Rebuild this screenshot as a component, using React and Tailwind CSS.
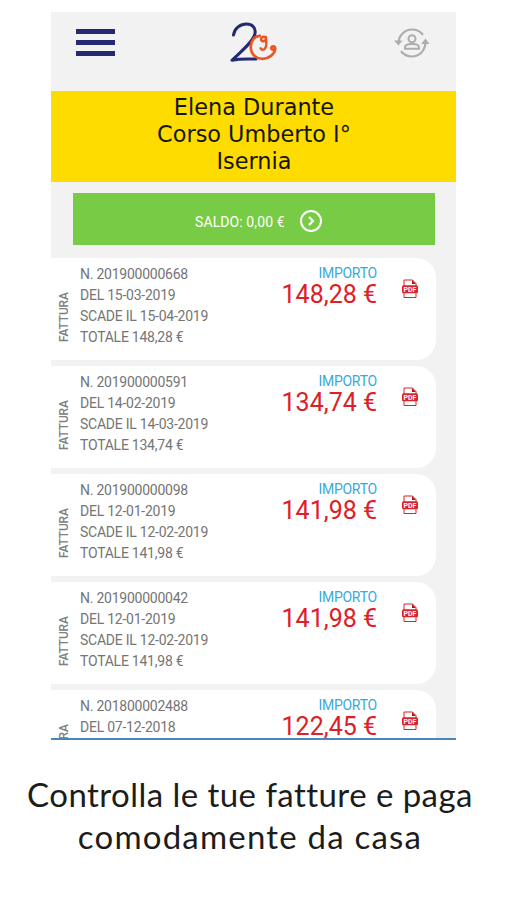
const invoices = [
  { n: "201900000668", date: "15-03-2019", due: "15-04-2019", total: "148,28" },
  { n: "201900000591", date: "14-02-2019", due: "14-03-2019", total: "134,74" },
  { n: "201900000098", date: "12-01-2019", due: "12-02-2019", total: "141,98" },
  { n: "201900000042", date: "12-01-2019", due: "12-02-2019", total: "141,98" },
  { n: "201800002488", date: "07-12-2018", total: "122,45" },
];

function Logo() {
  return (
    <svg width="50" height="42" viewBox="0 0 50 42" fill="none" strokeLinecap="round" strokeLinejoin="round">
      <path d="M3.500 13C4.500 6 10.500 2 16.500 2c6 0 9.500 4 8.500 9.500C24 19 11.500 29 2 38.300c8-1.800 17-1.500 24-1.200" stroke="#232a72" strokeWidth="3" />
      <path d="M30 13.800C24.500 14 20.500 19 20.800 25.500c.3 7 5.700 11.600 12 11.300C39.500 36.300 44.800 32 45.200 27c.3-3-2.800-3.400-3.800-1.600-.6 1.900 1.300 2.900 2.900 1.800" stroke="#ea5523" strokeWidth="2.700" />
      <path d="M35.600 15.500c-1.700-1.400-4.500-.6-4.500 1.700 0 2.600 3.500 2.800 4.700.5M35.800 15c.8 5 1.400 10.500-1.600 12.300-1.400.8-2.900.3-3.600-.9" stroke="#ea5523" strokeWidth="2.500" />
    </svg>
  );
}

function SwitchUser() {
  return (
    <svg width="36" height="32" viewBox="0 0 36 32" fill="none" stroke="#adadad" strokeWidth="2.200">
      <path d="M4.500 15.500C5 8 11 2.500 18 2.500c4.500 0 8.500 2 11 5.200M31.500 15.500C31 24 25 29.500 18 29.500c-4.500 0-8.500-2-11-5.200" />
      <path d="M0 13.500h8.500l-4 5zM27 17h8.500l-4-5.500z" fill="#adadad" stroke="none" />
      <circle cx="18" cy="11.800" r="3.500" strokeWidth="2" />
      <path d="M11 21.800v-1.500c0-2.300 3-3.400 7-3.400s7 1.100 7 3.400v1.500z" strokeWidth="2" />
    </svg>
  );
}

function PdfIcon() {
  return (
    <svg width="18" height="20" viewBox="0 0 18 20" fill="none">
      <path d="M3 7V1h8.500L15 4.500V7M3 14v4.500h12V14" stroke="#d8232a" strokeWidth="1" />
      <path d="M11 1v4h4z" fill="#b5121b" />
      <rect x="1" y="6.300" width="16" height="8" rx="1.500" fill="#d8232a" />
      <text x="9" y="12.800" textAnchor="middle" fontFamily="Roboto, sans-serif" fontWeight="700" fontSize="7" fill="#fff">PDF</text>
    </svg>
  );
}

function Invoice({ n, date, due, total }) {
  return (
    <article className="flex h-[102px] w-[385px] shrink-0 rounded-r-[20px] bg-white">
      <div className="flex w-[29px] shrink-0 items-start pl-[6px] pt-[33px]">
        <span className="h-[51px] rotate-180 whitespace-nowrap text-[12px] font-medium leading-[15px] tracking-[-0.15px] text-[#808080] [writing-mode:vertical-rl]">FATTURA</span>
      </div>
      <div className="grow whitespace-nowrap pt-[6px] text-[14px] leading-[21.1px] tracking-[-0.24px] text-[#757575]">
        <p>N. {n}</p>
        <p>DEL {date}</p>
        {due && <p>SCADE IL {due}</p>}
        {due && <p>TOTALE {total} €</p>}
      </div>
      <div className="mr-[24px] whitespace-nowrap pt-[6px] text-right">
        <p className="text-[14px] leading-[19.500px] tracking-[-0.25px] text-[#38a9dc]">IMPORTO</p>
        <p className="text-[25px] leading-[22px] text-[#dc2026]">{total} €</p>
      </div>
      <div className="mr-[17px] pt-[21px]"><PdfIcon /></div>
    </article>
  );
}

export default function App() {
  return (
    <main className="flex h-[900px] w-[507px] flex-col overflow-hidden bg-white pt-[12px] font-[Roboto,sans-serif]">
      <section className="ml-[51px] flex h-[728px] w-[405px] shrink-0 flex-col overflow-hidden border-b-2 border-[#4a86b8] bg-[#f2f2f2]">
        <header className="flex h-[79px] shrink-0 items-start justify-between pl-[25px] pr-[26px]">
          <div className="flex w-[39px] flex-col gap-[6px] pt-[17px]">
            <span className="h-[5px] bg-[#232a72]" />
            <span className="h-[5px] bg-[#232a72]" />
            <span className="h-[5px] bg-[#232a72]" />
          </div>
          <div className="pt-[10px]"><Logo /></div>
          <div className="pt-[15px]"><SwitchUser /></div>
        </header>
        <div className="h-[91px] shrink-0 bg-[#ffdc00] pt-[3px] pl-px text-center font-['DejaVu_Sans',sans-serif] text-[22.4px] leading-[27px] text-[#161600]">
          <p>Elena Durante</p>
          <p>Corso Umberto I°</p>
          <p>Isernia</p>
        </div>
        <div className="ml-[22px] mt-[11px] flex h-[52px] w-[362px] shrink-0 items-center bg-[#78cb44] pl-[122px] pt-[4px] text-[14px] tracking-[0.1px] text-white">
          <span className="w-[104px] whitespace-nowrap pt-[2px]">SALDO: 0,00 €</span>
          <svg width="24" height="24" viewBox="0 0 24 24" fill="none" stroke="white" strokeWidth="2">
            <circle cx="12" cy="12" r="10" />
            <path d="m10 8 4 4-4 4" strokeWidth="2.200" />
          </svg>
        </div>
        <div className="mt-[13px] flex flex-col gap-[6px]">
          {invoices.map((v) => <Invoice key={v.n} {...v} />)}
        </div>
      </section>
      <div className="mt-[33px] w-[500px] whitespace-nowrap text-center font-[Lato,sans-serif] text-[33px] leading-[42px] text-[#1c1c1c] [font-variant-ligatures:none]">
        <p className="tracking-[0.45px]">Controlla le tue fatture e paga</p>
        <p className="tracking-[1.2px]">comodamente da casa</p>
      </div>
    </main>
  );
}
